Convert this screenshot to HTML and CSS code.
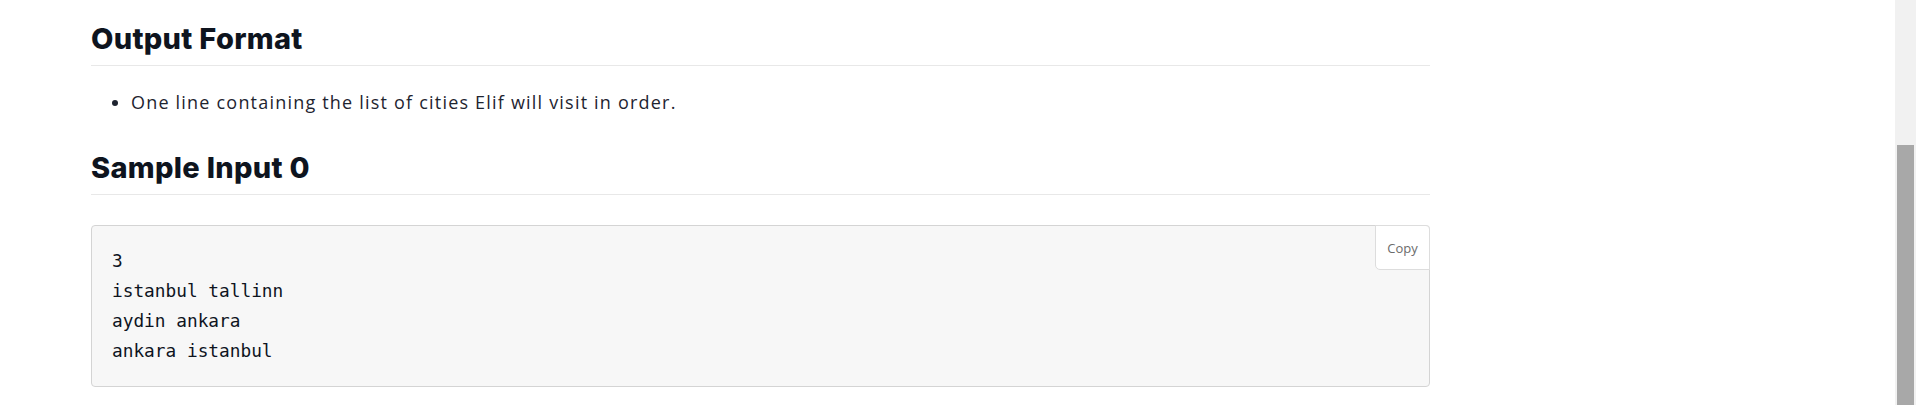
FILE: index.html
```html
<!DOCTYPE html>
<html lang="en">
<head>
<meta charset="utf-8">
<title>Problem</title>
<link rel="stylesheet" href="styles.css">
</head>
<body>
<main class="content">
  <h2 class="section-title">Output Format</h2>
  <ul class="bullets">
    <li>One line containing the list of cities Elif will visit in order.</li>
  </ul>
  <h2 class="section-title">Sample Input 0</h2>
  <div class="code-box">
    <pre class="code">3
istanbul tallinn
aydin ankara
ankara istanbul</pre>
    <button class="copy-btn">Copy</button>
  </div>
</main>
<div class="scrollbar"><div class="scroll-thumb"></div></div>
</body>
</html>
```

FILE: styles.css
```css
html, body {
  margin: 0;
  padding: 0;
  background: #ffffff;
  overflow: hidden;
}

.content {
  width: 1339px;
  margin-left: 91px;
  padding-top: 21px;
  font-family: "Open Sans", Inter, sans-serif;
  color: #0e141e;
}

.section-title {
  margin: 0;
  font-family: Inter, "Open Sans", sans-serif;
  font-size: 29px;
  font-weight: 800;
  line-height: 36px;
  letter-spacing: 0.3px;
  color: #0e141e;
  padding-bottom: 8px;
  border-bottom: 1px solid #e8e8e8;
}

.bullets {
  margin: 23px 0 34px 0;
  padding-left: 40px;
  font-family: "Open Sans", Inter, sans-serif;
  font-size: 18px;
  line-height: 27px;
  letter-spacing: 1.2px;
  color: #1e2430;
}

.code-box {
  position: relative;
  margin-top: 30px;
  background: #f7f7f7;
  border: 1px solid #d4d4d4;
  border-radius: 4px;
  padding: 20px;
}

.code {
  margin: 0;
  font-family: "DejaVu Sans Mono", "Liberation Mono", monospace;
  font-size: 17.8px;
  line-height: 30px;
  color: #0e141e;
}

.copy-btn {
  position: absolute;
  top: -1px;
  right: -1px;
  width: 55px;
  height: 45px;
  box-sizing: border-box;
  background: #ffffff;
  border: 1px solid #dddddd;
  border-radius: 0 4px 0 5px;
  font-family: "Open Sans", "Noto Sans", sans-serif;
  font-size: 13px;
  color: #6b6b6b;
  padding: 0;
}

.scrollbar {
  position: fixed;
  top: 0;
  right: 0;
  width: 21px;
  height: 100%;
  background: #f1f1f1;
}

.scroll-thumb {
  position: absolute;
  top: 145px;
  left: 2px;
  width: 17px;
  bottom: 0;
  background: #a8a8a8;
}
```
